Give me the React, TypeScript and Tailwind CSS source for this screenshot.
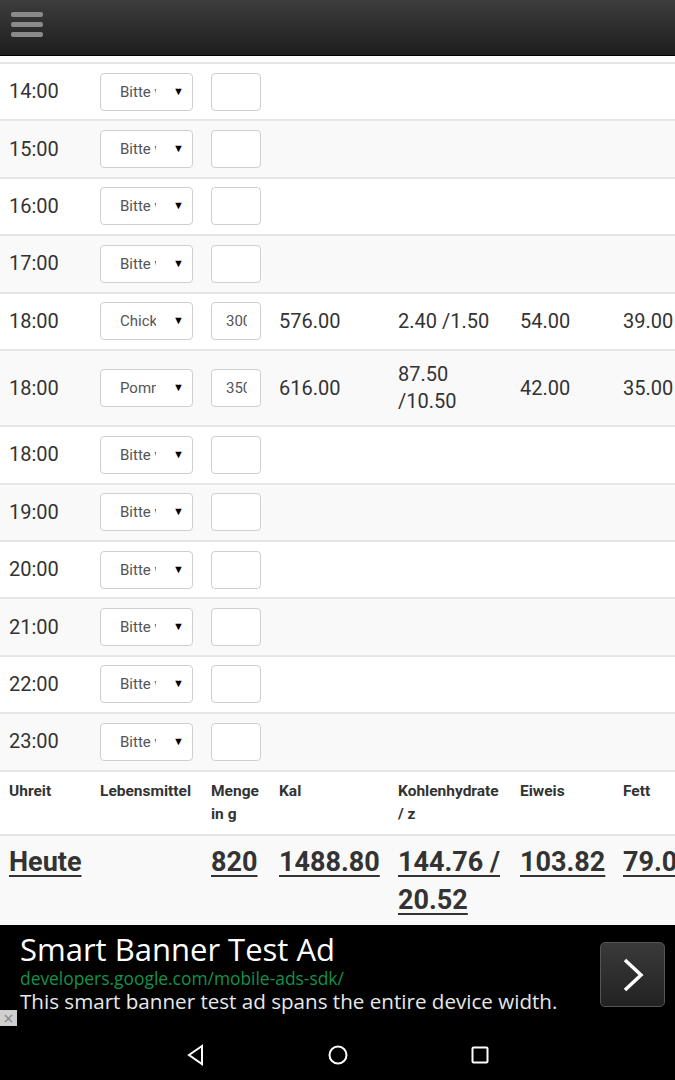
import React from 'react';

type Entry = {
  time: string;
  food?: string;
  amount?: string;
  kal?: string;
  kh?: string;
  eiweis?: string;
  fett?: string;
};

const entries: Entry[] = [
  { time: '14:00' },
  { time: '15:00' },
  { time: '16:00' },
  { time: '17:00' },
  { time: '18:00', food: 'Chicken', amount: '300', kal: '576.00', kh: '2.40 /1.50', eiweis: '54.00', fett: '39.00' },
  { time: '18:00', food: 'Pommes', amount: '350', kal: '616.00', kh: '87.50 /10.50', eiweis: '42.00', fett: '35.00' },
  { time: '18:00' },
  { time: '19:00' },
  { time: '20:00' },
  { time: '21:00' },
  { time: '22:00' },
  { time: '23:00' },
];

const grid = 'grid grid-cols-[91px_111px_68px_119px_122px_103px_1fr] pl-[9px]';

function Row({ e, odd }: { e: Entry; odd: boolean }) {
  return (
    <div className={`${grid} items-center py-[8.7px] border-t-2 border-[#e6e6e6] text-[20px] leading-[27px] text-[#333] ${odd ? 'bg-[#f9f9f9]' : 'bg-white'}`}>
      <div>{e.time}</div>
      <div className="flex h-[38px] w-[93px] items-center rounded-[4px] border border-[#cfcfcf] bg-white pl-[19px] pr-[8px]">
        <div className="h-[20px] w-[36px] overflow-hidden whitespace-nowrap text-[15px] leading-[20px] text-[#555]">
          {e.food ?? 'Bitte wählen'}
        </div>
        <div className="ml-auto text-[11px] leading-[20px] text-black">▼</div>
      </div>
      <div className="flex h-[38px] w-[50px] items-center rounded-[4px] border border-[#cfcfcf] bg-white pl-[14px]">
        <div className="h-[20px] w-[21px] overflow-hidden whitespace-nowrap text-[15px] leading-[20px] text-[#555]">{e.amount}</div>
      </div>
      <div>{e.kal}</div>
      <div className="py-[1.5px] pr-[12px]">{e.kh}</div>
      <div>{e.eiweis}</div>
      <div className="whitespace-nowrap">{e.fett}</div>
    </div>
  );
}

export default function App() {
  return (
    <div className="flex h-[1080px] w-[675px] flex-col overflow-hidden bg-white font-['Roboto',sans-serif]">
      <div className="flex h-[56px] shrink-0 flex-col gap-[5px] border-b border-black bg-gradient-to-b from-[#3d3d3d] to-[#1e1e1e] pl-[11px] pt-[12px]">
        <div className="h-[5px] w-[32px] rounded-[2px] bg-[#8a8a8a]" />
        <div className="h-[5px] w-[32px] rounded-[2px] bg-[#8a8a8a]" />
        <div className="h-[5px] w-[32px] rounded-[2px] bg-[#8a8a8a]" />
      </div>

      <div className="flex-1 overflow-hidden">
        <div className="h-[6px] bg-white" />
        {entries.map((e, i) => (
          <Row key={i} e={e} odd={i % 2 === 1} />
        ))}

        <div className={`${grid} items-start border-t-2 border-[#e6e6e6] bg-white pt-[8px] pb-[8px] text-[15.5px] font-bold leading-[23px] text-[#333]`}>
          <div>Uhreit</div>
          <div>Lebensmittel</div>
          <div>Menge<br />in g</div>
          <div>Kal</div>
          <div>Kohlenhydrate<br />/ z</div>
          <div>Eiweis</div>
          <div>Fett</div>
        </div>

        <div className={`${grid} items-start border-t-2 border-[#e6e6e6] bg-[#f9f9f9] pt-[7px] pb-[8px] text-[27px] font-bold leading-[38px] text-[#333] underline underline-offset-[4px] decoration-2`}>
          <div>Heute</div>
          <div />
          <div>820</div>
          <div>1488.80</div>
          <div className="pr-[4px]">144.76 / 20.52</div>
          <div>103.82</div>
          <div className="whitespace-nowrap">79.05</div>
        </div>
      </div>

      <div className="relative flex h-[105px] shrink-0 bg-black font-['Open_Sans',sans-serif]">
        <div className="flex-1 pl-[20px] pt-[5px]">
          <div className="text-[31px] leading-[38px] text-white">Smart Banner Test Ad</div>
          <div className="text-[17.4px] leading-[20px] text-[#12934a]">developers.google.com/mobile-ads-sdk/</div>
          <div className="text-[20.6px] leading-[26px] text-[#e8e8e8]">This smart banner test ad spans the entire device width.</div>
        </div>
        <div className="mr-[10px] mt-[17px] flex h-[65px] w-[65px] items-center justify-center rounded-[5px] border border-[#555] bg-gradient-to-b from-[#3a3a3a] to-[#222]">
          <svg width="24" height="34" viewBox="0 0 24 34" fill="none" stroke="white" strokeWidth="3.5">
            <path d="M4 2 L20 17 L4 32" />
          </svg>
        </div>
        <div className="absolute bottom-[4px] left-0 flex h-[16px] w-[17px] items-center justify-center bg-[#cfcfcf] text-[18px] leading-none text-[#888]">×</div>
      </div>

      <div className="flex h-[50px] shrink-0 items-center justify-center gap-[118px] bg-black">
        <svg width="24" height="24" viewBox="0 0 24 24" fill="none" stroke="white" strokeWidth="2">
          <path d="M18 3 L5 12 L18 21 Z" />
        </svg>
        <svg width="24" height="24" viewBox="0 0 24 24" fill="none" stroke="white" strokeWidth="2">
          <circle cx="12" cy="12" r="8.5" />
        </svg>
        <svg width="24" height="24" viewBox="0 0 24 24" fill="none" stroke="white" strokeWidth="2">
          <rect x="4.5" y="4.5" width="15" height="15" rx="1" />
        </svg>
      </div>
    </div>
  );
}
